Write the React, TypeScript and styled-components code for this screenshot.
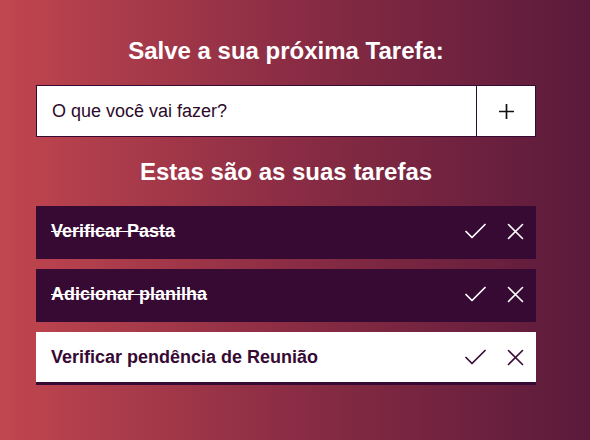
import React from "react";
import styled, { createGlobalStyle } from "styled-components";

const Global = createGlobalStyle`
  html, body { margin: 0; padding: 0; }
  body {
    font-family: "Liberation Sans", Arial, sans-serif;
    min-height: 440px;
    background: linear-gradient(90deg, #c1464f 0%, #8a2c44 50%, #5b1a3b 100%);
  }
`;

const Page = styled.main`
  min-height: 440px;
  padding: 37px 0 0 36px;
  box-sizing: border-box;
`;

const Container = styled.div`
  width: 500px;
  display: flex;
  flex-direction: column;
`;

const Heading = styled.h1<{ $top: number }>`
  margin: ${(p) => p.$top}px 0 0 0;
  font-size: 24px;
  line-height: 28px;
  font-weight: 700;
  color: #ffffff;
  text-align: center;
`;

const Form = styled.form`
  margin-top: 20px;
  display: flex;
  height: 52px;
  box-sizing: border-box;
  border: 1px solid #360a33;
  background: #fff;
`;

const Input = styled.input`
  flex: 1;
  border: none;
  outline: none;
  padding: 0 15px;
  font-family: "Liberation Sans", Arial, sans-serif;
  font-size: 18px;
  color: #360a33;
  background: #fff;
  &::placeholder { color: #2b0a2a; opacity: 1; }
`;

const AddButton = styled.button`
  width: 59px;
  border: none;
  border-left: 1px solid #360a33;
  background: #fff;
  display: flex;
  align-items: center;
  justify-content: center;
  padding: 0;
  cursor: pointer;
`;

const List = styled.ul`
  list-style: none;
  margin: 20px 0 0 0;
  padding: 0;
  display: flex;
  flex-direction: column;
  gap: 10px;
`;

const Item = styled.li<{ $done: boolean }>`
  height: 50px;
  border-bottom: 3px solid #360a33;
  background: ${(p) => (p.$done ? "#360a33" : "#ffffff")};
  color: ${(p) => (p.$done ? "#ffffff" : "#360a33")};
  display: flex;
  align-items: center;
  padding: 0 12px 0 15px;
`;

const Label = styled.span<{ $done: boolean }>`
  flex: 1;
  font-size: 18px;
  font-weight: 700;
  text-decoration: ${(p) => (p.$done ? "line-through" : "none")};
`;

const Actions = styled.div`
  display: flex;
  align-items: center;
  gap: 21px;
`;

const IconBtn = styled.button`
  border: none;
  background: none;
  padding: 0;
  color: inherit;
  display: flex;
  cursor: pointer;
`;

const Check = () => (
  <svg width="21" height="16" viewBox="0 0 21 16" fill="none">
    <polyline points="1,8.5 7,14.5 20,1.5" stroke="currentColor" strokeWidth="1.7" strokeLinecap="round" strokeLinejoin="round" />
  </svg>
);

const Cross = () => (
  <svg width="17" height="17" viewBox="0 0 17 17" fill="none">
    <path d="M1.5 1.5 L15.5 15.5 M15.5 1.5 L1.5 15.5" stroke="currentColor" strokeWidth="1.6" strokeLinecap="round" />
  </svg>
);

const Plus = () => (
  <svg width="17" height="17" viewBox="0 0 17 17" fill="none">
    <path d="M8.5 1 V16 M1 8.5 H16" stroke="#111" strokeWidth="1.7" />
  </svg>
);

const tasks = [
  { text: "Verificar Pasta", done: true },
  { text: "Adicionar planilha", done: true },
  { text: "Verificar pendência de Reunião", done: false },
];

export default function App() {
  return (
    <>
      <Global />
      <Page>
        <Container>
          <Heading $top={0}>Salve a sua próxima Tarefa:</Heading>
          <Form onSubmit={(e) => e.preventDefault()}>
            <Input placeholder="O que você vai fazer?" />
            <AddButton type="submit" aria-label="Adicionar">
              <Plus />
            </AddButton>
          </Form>
          <Heading as="h2" $top={21}>Estas são as suas tarefas</Heading>
          <List>
            {tasks.map((t) => (
              <Item key={t.text} $done={t.done}>
                <Label $done={t.done}>{t.text}</Label>
                <Actions>
                  <IconBtn aria-label="Concluir"><Check /></IconBtn>
                  <IconBtn aria-label="Remover"><Cross /></IconBtn>
                </Actions>
              </Item>
            ))}
          </List>
        </Container>
      </Page>
    </>
  );
}
